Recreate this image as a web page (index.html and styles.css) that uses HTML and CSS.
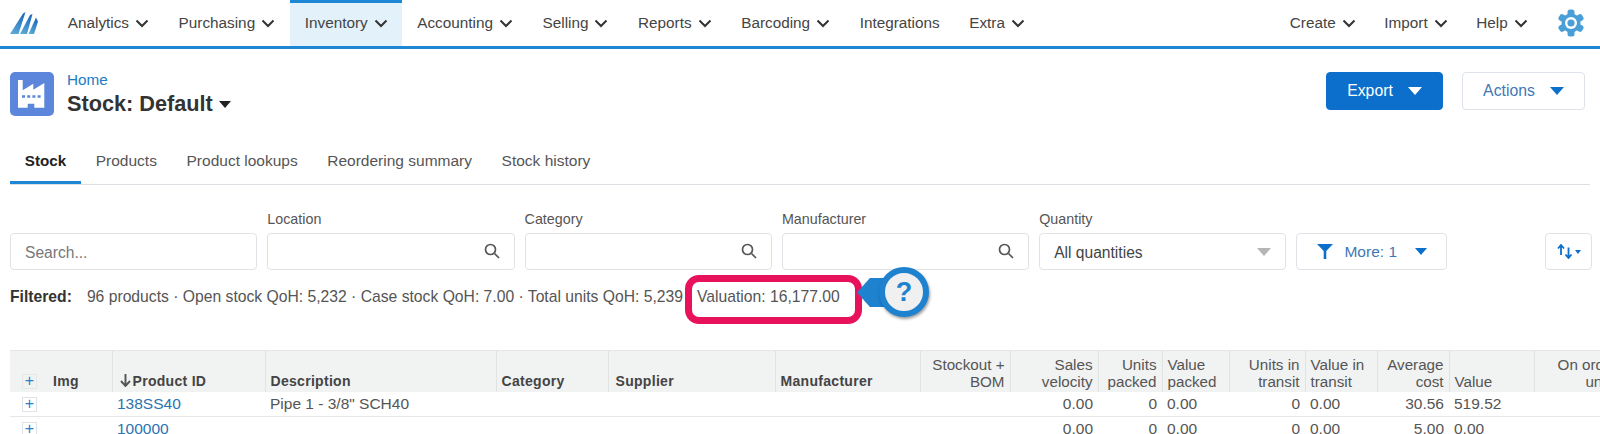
FILE: index.html
```html
<!DOCTYPE html>
<html lang="en">
<head>
    <meta charset="UTF-8">
    <title>Stock: Default</title>
    <link rel="stylesheet" href="styles.css">
</head>
<body>
    <header class="topbar">
        <a class="logo">
            <svg width="30" height="24" viewBox="0 0 30 24">
                <defs><linearGradient id="logo-fade" x1="0" y1="1" x2="0.4" y2="0"><stop offset="0" stop-color="#62aed6"/><stop offset="1" stop-color="#1f6fc0"/></linearGradient></defs>
                <path d="M0 23 L13 2.5 L15.5 1 L8.5 23 Z" fill="url(#logo-fade)"/>
                <path d="M10 23 L20 4 L22.5 3 L17 23 Z" fill="url(#logo-fade)"/>
                <path d="M18.5 23 L26 6.5 L28 10.5 L24 23 Z" fill="url(#logo-fade)"/>
            </svg>
        </a>
        <nav class="main-nav">
            <a class="nav-item">Analytics <svg class="chev" viewBox="0 0 14 9"><path d="M1.5 1.5 L7 7 L12.5 1.5"/></svg></a>
            <a class="nav-item">Purchasing <svg class="chev" viewBox="0 0 14 9"><path d="M1.5 1.5 L7 7 L12.5 1.5"/></svg></a>
            <a class="nav-item active">Inventory <svg class="chev" viewBox="0 0 14 9"><path d="M1.5 1.5 L7 7 L12.5 1.5"/></svg></a>
            <a class="nav-item">Accounting <svg class="chev" viewBox="0 0 14 9"><path d="M1.5 1.5 L7 7 L12.5 1.5"/></svg></a>
            <a class="nav-item">Selling <svg class="chev" viewBox="0 0 14 9"><path d="M1.5 1.5 L7 7 L12.5 1.5"/></svg></a>
            <a class="nav-item">Reports <svg class="chev" viewBox="0 0 14 9"><path d="M1.5 1.5 L7 7 L12.5 1.5"/></svg></a>
            <a class="nav-item">Barcoding <svg class="chev" viewBox="0 0 14 9"><path d="M1.5 1.5 L7 7 L12.5 1.5"/></svg></a>
            <a class="nav-item">Integrations</a>
            <a class="nav-item">Extra <svg class="chev" viewBox="0 0 14 9"><path d="M1.5 1.5 L7 7 L12.5 1.5"/></svg></a>
        </nav>
        <nav class="side-nav">
            <a class="nav-item">Create <svg class="chev" viewBox="0 0 14 9"><path d="M1.5 1.5 L7 7 L12.5 1.5"/></svg></a>
            <a class="nav-item">Import <svg class="chev" viewBox="0 0 14 9"><path d="M1.5 1.5 L7 7 L12.5 1.5"/></svg></a>
            <a class="nav-item">Help <svg class="chev" viewBox="0 0 14 9"><path d="M1.5 1.5 L7 7 L12.5 1.5"/></svg></a>
            <a class="gear">
                <svg width="28" height="28" viewBox="-14 -14 28 28">
                    <g fill="#4a9fd6">
                        <circle r="9.5"/>
                        <rect x="-3.5" y="-13.5" width="7" height="27" rx="2.5"/>
                        <rect x="-3.5" y="-13.5" width="7" height="27" rx="2.5" transform="rotate(60)"/>
                        <rect x="-3.5" y="-13.5" width="7" height="27" rx="2.5" transform="rotate(120)"/>
                    </g>
                    <circle r="6" fill="#fff"/>
                    <circle r="3.6" fill="#4a9fd6"/>
                </svg>
            </a>
        </nav>
    </header>

    <section class="page-head">
        <div class="page-icon">
            <svg width="30" height="30" viewBox="0 0 30 30">
                <path fill="#fff" d="M1 1 H5.7 V11.3 L16.3 4.7 V10.7 L27.3 4 V28.7 H17.3 V24.7 H10.7 V28.7 H1 Z"/>
                <path stroke="#5b86dc" stroke-width="2.4" stroke-dasharray="3 2.2" d="M5 17.5 H24"/>
            </svg>
        </div>
        <div class="page-title">
            <a class="crumb">Home</a>
            <h1>Stock: Default <span class="title-caret"></span></h1>
        </div>
        <div class="page-actions">
            <button class="btn btn-primary">Export <span class="caret caret-white"></span></button>
            <button class="btn btn-plain">Actions <span class="caret"></span></button>
        </div>
    </section>

    <div class="tabs">
        <a class="tab active">Stock</a>
        <a class="tab">Products</a>
        <a class="tab">Product lookups</a>
        <a class="tab">Reordering summary</a>
        <a class="tab">Stock history</a>
    </div>

    <section class="filters">
        <div class="field field-search"><div class="input"><span class="placeholder">Search...</span></div></div>
        <div class="field"><label>Location</label><div class="input"><svg class="lens" viewBox="0 0 16 16"><circle cx="6.5" cy="6.5" r="5"/><path d="M10.5 10.5 L15 15"/></svg></div></div>
        <div class="field"><label>Category</label><div class="input"><svg class="lens" viewBox="0 0 16 16"><circle cx="6.5" cy="6.5" r="5"/><path d="M10.5 10.5 L15 15"/></svg></div></div>
        <div class="field"><label>Manufacturer</label><div class="input"><svg class="lens" viewBox="0 0 16 16"><circle cx="6.5" cy="6.5" r="5"/><path d="M10.5 10.5 L15 15"/></svg></div></div>
        <div class="field"><label>Quantity</label><div class="input input-select"><span>All quantities</span><span class="caret caret-grey"></span></div></div>
        <button class="more-btn">
            <svg class="funnel" width="16" height="15" viewBox="0 0 16 15"><path fill="#0b6fcb" d="M0 0 H16 L9.3 7 V15 H6.7 V7 Z"/></svg>
            <span>More: 1</span>
            <span class="caret"></span>
        </button>
        <button class="sort-btn">
            <svg width="16" height="15" viewBox="0 0 16 15"><path d="M4 11 V1.5 M1 4.5 L4 1 L7 4.5 M11.5 3.5 V13.5 M8.5 10.5 L11.5 14 L14.5 10.5" fill="none" stroke="#0b6fcb" stroke-width="1.8"/></svg>
            <span class="caret caret-small"></span>
        </button>
    </section>

    <p class="summary"><strong>Filtered:</strong>96 products &middot; Open stock QoH: 5,232 &middot; Case stock QoH: 7.00 &middot; Total units QoH: 5,239 &middot; Valuation: 16,177.00</p>

    <div class="callout">
        <div class="callout-box"></div>
        <div class="callout-help">
            <div class="callout-arrow"></div>
            <div class="callout-ring"><span class="callout-face">?</span></div>
        </div>
    </div>

    <div class="grid-wrap">
        <table class="grid">
            <colgroup>
                <col class="c-img"><col class="c-id"><col class="c-desc"><col class="c-cat"><col class="c-sup"><col class="c-man"><col class="c-so"><col class="c-vel"><col class="c-up"><col class="c-vp"><col class="c-ut"><col class="c-vt"><col class="c-avg"><col class="c-val"><col class="c-ord">
            </colgroup>
            <thead>
                <tr>
                    <th><span class="plus plus-head">+</span>Img</th>
                    <th><svg class="sort-arrow" width="11" height="13" viewBox="0 0 11 13"><path d="M5.5 0 V11 M1 7 L5.5 12 L10 7" fill="none" stroke="#555" stroke-width="1.9"/></svg>Product ID</th>
                    <th>Description</th>
                    <th>Category</th>
                    <th class="th-wide">Supplier</th>
                    <th>Manufacturer</th>
                    <th class="num thin">Stockout +<br>BOM</th>
                    <th class="num thin">Sales<br>velocity</th>
                    <th class="num thin">Units<br>packed</th>
                    <th class="thin">Value<br>packed</th>
                    <th class="num thin">Units in<br>transit</th>
                    <th class="thin">Value in<br>transit</th>
                    <th class="num thin">Average<br>cost</th>
                    <th class="thin">Value</th>
                    <th class="num thin">On order<br>units</th>
                </tr>
            </thead>
            <tbody>
                <tr>
                    <td><span class="plus">+</span></td>
                    <td><a class="link">138SS40</a></td>
                    <td>Pipe 1 - 3/8" SCH40</td>
                    <td></td><td></td><td></td><td></td>
                    <td class="num">0.00</td><td class="num">0</td><td>0.00</td><td class="num">0</td><td>0.00</td><td class="num">30.56</td><td>519.52</td><td></td>
                </tr>
                <tr>
                    <td><span class="plus">+</span></td>
                    <td><a class="link">100000</a></td>
                    <td></td>
                    <td></td><td></td><td></td><td></td>
                    <td class="num">0.00</td><td class="num">0</td><td>0.00</td><td class="num">0</td><td>0.00</td><td class="num">5.00</td><td>0.00</td><td></td>
                </tr>
            </tbody>
        </table>
    </div>
</body>
</html>
```

FILE: styles.css
```css
html, body {
    margin: 0;
    padding: 0;
    height: 434px;
    overflow: hidden;
    background: #fff;
    font-family: "Liberation Sans", Arial, sans-serif;
    font-size: 15px;
    color: #444;
}
a {
    text-decoration: none;
    color: inherit;
}
button {
    font-family: inherit;
    cursor: pointer;
}

/* top nav */
.topbar {
    height: 46px;
    display: flex;
    align-items: stretch;
    border-bottom: 3px solid #1d87d6;
}
.logo {
    width: 53px;
    padding: 11px 0 0 10px;
    box-sizing: border-box;
}
.main-nav, .side-nav {
    display: flex;
    align-items: stretch;
}
.side-nav {
    margin-left: auto;
}
.nav-item {
    display: flex;
    align-items: center;
    gap: 6px;
    padding: 0 14.8px 3px;
    font-size: 15.3px;
    color: #444;
    border-top: 3px solid transparent;
    box-sizing: border-box;
}
.side-nav .nav-item {
    padding: 0 14.3px 3px;
}
.nav-item.active {
    background: #e3f1fb;
    border-top-color: #1d87d6;
}
.chev {
    width: 14px;
    height: 9px;
    fill: none;
    stroke: #333;
    stroke-width: 2;
}
.gear {
    padding: 9px 15px 0 15px;
}

/* page heading */
.page-head {
    display: flex;
    padding: 23px 15px 0 10px;
    height: 70px;
}
.page-icon {
    width: 44px;
    height: 44px;
    background: #5b86dc;
    border-radius: 5px;
    display: flex;
    align-items: center;
    justify-content: center;
}
.page-title {
    margin: -1px 0 0 13px;
}
.crumb {
    display: block;
    color: #1c7cc4;
    font-size: 15.3px;
    line-height: 18px;
}
h1 {
    margin: 3px 0 0;
    font-size: 21.7px;
    line-height: 24px;
    color: #333;
}
.title-caret {
    display: inline-block;
    width: 0;
    height: 0;
    border: 6px solid transparent;
    border-top: 7px solid #222;
    border-bottom: 0;
    vertical-align: 3px;
}
.page-actions {
    margin-left: auto;
    display: flex;
    gap: 19px;
    height: 38px;
}
.btn {
    border-radius: 4px;
    font-size: 15.8px;
    display: flex;
    align-items: center;
    justify-content: center;
    gap: 15px;
}
.btn-primary {
    width: 117px;
    background: #0b6fcb;
    border: 1px solid #0b6fcb;
    color: #fff;
}
.btn-plain {
    width: 123px;
    background: #fff;
    border: 1px solid #dde3e8;
    color: #3f78b5;
}
.caret {
    display: inline-block;
    width: 0;
    height: 0;
    border-left: 7px solid transparent;
    border-right: 7px solid transparent;
    border-top: 8px solid #0b6fcb;
}
.caret-white {
    border-top-color: #fff;
}
.caret-grey {
    border-top-color: #b5b5b5;
}
.caret-small {
    border-left-width: 3.5px;
    border-right-width: 3.5px;
    border-top-width: 4px;
}

/* tabs */
.tabs {
    display: flex;
    margin: 0 10px;
    height: 42px;
    border-bottom: 1px solid #dcdfe3;
}
.tab {
    padding: 10px 14.8px 0;
    font-size: 15.5px;
    color: #555;
    height: 29px;
}
.tab.active {
    font-size: 15.2px;
    font-weight: bold;
    color: #222;
    border-bottom: 3px solid #1d87d6;
}

/* filters */
.filters {
    display: flex;
    align-items: flex-end;
    gap: 10px;
    margin: 25px 8px 0 10px;
}
.field {
    width: 247.3px;
}
.field label {
    display: block;
    font-size: 14.3px;
    color: #555;
    line-height: 18px;
    margin-bottom: 5px;
}
.input {
    height: 37px;
    border: 1px solid #dfe3e7;
    border-radius: 4px;
    box-sizing: border-box;
    display: flex;
    align-items: center;
    justify-content: space-between;
    padding: 2px 14px 0;
    font-size: 15.6px;
    color: #444;
}
.input-select {
    padding-top: 3px;
}
.placeholder {
    color: #777;
}
.input .lens {
    margin-left: auto;
    margin-top: -3px;
}
.input .caret {
    margin-top: -3px;
}
.lens {
    width: 16px;
    height: 16px;
    fill: none;
    stroke: #555;
    stroke-width: 1.7;
}
.more-btn {
    width: 151px;
    height: 37px;
    padding: 0;
    background: #fff;
    border: 1px solid #dfe3e7;
    border-radius: 4px;
    color: #3f78b5;
    font-size: 15.5px;
    display: flex;
    align-items: center;
    justify-content: center;
}
.funnel {
    margin-right: 11px;
}
.more-btn .caret {
    margin-left: 17.5px;
    border-left-width: 6.5px;
    border-right-width: 6.5px;
    border-top-width: 7px;
}
.sort-btn {
    width: 47px;
    height: 37px;
    margin-left: auto;
    background: #fff;
    border: 1px solid #dfe3e7;
    border-radius: 4px;
    display: flex;
    align-items: center;
    justify-content: center;
    gap: 2px;
    padding: 0;
}

/* summary line */
.summary {
    margin: 17px 10px 0;
    font-size: 15.7px;
    line-height: 20px;
    color: #555;
    white-space: nowrap;
}
.summary strong {
    color: #333;
    margin-right: 15px;
}

/* help annotation over the page */
.callout {
    position: absolute;
    left: 685px;
    top: 275px;
    width: 250px;
    height: 50px;
}
.callout-box {
    width: 177px;
    height: 49px;
    box-sizing: border-box;
    border: 7px solid #e8125c;
    border-radius: 14px;
}
.callout-help {
    position: absolute;
    left: 172px;
    top: -12px;
}
.callout-arrow {
    position: absolute;
    left: 0;
    top: 15px;
    width: 30px;
    height: 29px;
    background: #1f82cf;
    clip-path: polygon(43% 0, 100% 0, 100% 100%, 43% 100%, 0 50%);
}
.callout-ring {
    position: absolute;
    left: 22px;
    top: 4px;
    width: 50px;
    height: 50px;
    box-sizing: border-box;
    border-radius: 50%;
    border: 6px solid #1f82cf;
    background: #f0f0f0;
    box-shadow: 1px 2px 3px rgba(0, 0, 0, 0.4);
    display: flex;
    align-items: center;
    justify-content: center;
}
.callout-face {
    color: #1f82cf;
    font-weight: bold;
    font-size: 27px;
}

/* stock table */
.grid-wrap {
    position: absolute;
    left: 10px;
    top: 350px;
    right: 0;
    overflow: hidden;
}
.grid {
    border-collapse: collapse;
    table-layout: fixed;
    width: 1613px;
    font-size: 15.5px;
}
.c-img { width: 102px; }
.c-id { width: 153px; }
.c-desc { width: 231px; }
.c-cat { width: 112px; }
.c-sup { width: 167px; }
.c-man { width: 145px; }
.c-so { width: 90px; }
.c-vel { width: 88px; }
.c-up { width: 64px; }
.c-vp { width: 67px; }
.c-ut { width: 76px; }
.c-vt { width: 72px; }
.c-avg { width: 72px; }
.c-val { width: 85px; }
.c-ord { width: 89px; }
.grid th {
    height: 41px;
    box-sizing: border-box;
    padding: 3px 5px 2px;
    background: #f1f2f2;
    border-right: 1px solid #e1e3e3;
    border-top: 1px solid #e4e6e6;
    text-align: left;
    vertical-align: bottom;
    font-weight: bold;
    font-size: 14px;
    line-height: 18px;
    color: #444;
    letter-spacing: 0.3px;
}
.grid th.thin {
    font-weight: normal;
    font-size: 15.2px;
    line-height: 17px;
    letter-spacing: 0;
    color: #555;
}
.grid th.th-wide {
    padding-left: 7px;
}
.grid th.num, .grid td.num {
    text-align: right;
}
.grid td {
    height: 25px;
    box-sizing: border-box;
    padding: 0 5px;
    border-bottom: 1px solid #e6e6e6;
    color: #555;
    white-space: nowrap;
}
.link {
    color: #2b73b0;
}
.plus {
    display: inline-block;
    width: 13px;
    height: 13px;
    margin-left: 7px;
    border: 1px solid #dde3e8;
    text-align: center;
    line-height: 12px;
    font-size: 16px;
    color: #2b7fc2;
    font-weight: normal;
}
.plus-head {
    border-color: #e6e8e8;
    margin-right: 16px;
}
.sort-arrow {
    margin: 0 2px 0 2px;
    vertical-align: -1px;
}
```
